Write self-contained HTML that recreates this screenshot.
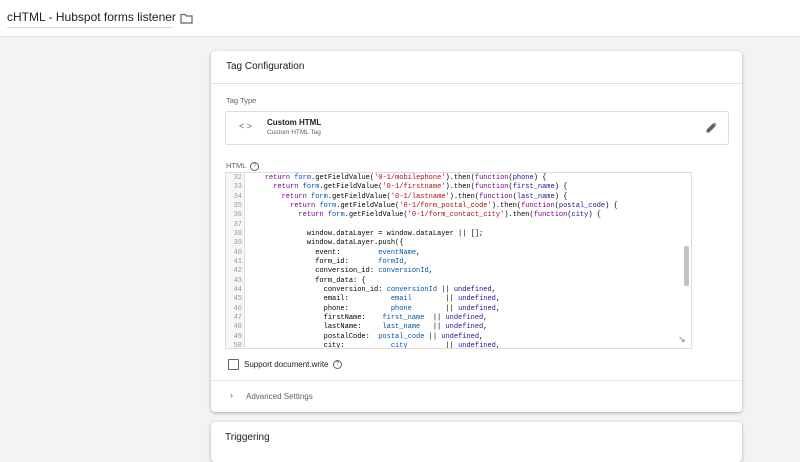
<!DOCTYPE html>
<html><head><style>
body{margin:0;width:800px;height:450px;overflow:hidden;background:#f1f3f4;font-family:"Liberation Sans",sans-serif;position:relative}
.top{position:absolute;left:0;top:0;width:800px;height:36px;background:#fff;border-bottom:1px solid #e6e6e6}
.title{position:absolute;left:7px;top:10px;font-size:12px;color:#202124;border-bottom:1px solid #dadce0;padding-bottom:3px;width:166px;white-space:nowrap}
.card{position:absolute;left:211px;width:531px;background:#fff;border-radius:4px;box-shadow:0 1px 3px rgba(0,0,0,.3)}
.abs{position:absolute}
.code{position:absolute;left:225px;top:172px;width:465px;height:175px;border:1px solid #ddd;overflow:hidden;background:#fff}
.gut{position:absolute;left:0;top:0;width:18px;height:175px;background:#f7f7f7;border-right:1px solid #ddd}
pre{margin:0;font-family:"Liberation Mono",monospace;font-size:7px;line-height:9.33px;position:absolute;top:1px}
.ln{left:0;width:16px;text-align:right;color:#999}
.tx{left:22px;color:#000}
.k{color:#708}.s{color:#a11}.v{color:#05a}.d{color:#219}
</style></head><body>
<div class="top"><div class="title">cHTML - Hubspot forms listener</div>
<svg class="abs" style="left:180px;top:13px" width="13" height="11" viewBox="0 0 13 11"><path d="M1 1.5h4l1.3 1.5H12v7H1z" fill="none" stroke="#5f6368" stroke-width="1.2"/></svg></div>
<div class="card" style="top:51px;height:361px">
<div class="abs" style="left:15px;top:10px;font-size:10px;color:#202124">Tag Configuration</div>
<div class="abs" style="left:0;top:32px;width:531px;height:1px;background:#e0e0e0"></div>
<div class="abs" style="left:15px;top:45px;font-size:7.5px;color:#5f6368">Tag Type</div>
<div class="abs" style="left:14px;top:60px;width:502px;height:32px;border:1px solid #dadce0;border-radius:3px"></div>
<div class="abs" style="left:28px;top:70px;font-size:9px;color:#5f6368">&lt; &gt;</div>
<div class="abs" style="left:56px;top:67px;font-size:8px;font-weight:bold;color:#202124">Custom HTML</div>
<div class="abs" style="left:56px;top:78px;font-size:6.5px;color:#5f6368">Custom HTML Tag</div>
<svg class="abs" style="left:495px;top:71px" width="11" height="11" viewBox="0 0 11 11"><path d="M1 8v2h2l6-6-2-2z M8 1l2 2" fill="#5f6368" stroke="#5f6368" stroke-width="1"/></svg>
<div class="abs" style="left:15px;top:110px;font-size:7.5px;color:#5f6368">HTML &nbsp;<span style="display:inline-block;width:7px;height:7px;border:1px solid #5f6368;border-radius:50%;font-size:5px;text-align:center;line-height:7px;vertical-align:middle">?</span></div>
<div class="abs" style="left:17px;top:308px;width:9px;height:9px;border:1.3px solid #5f6368;border-radius:1px"></div>
<div class="abs" style="left:33px;top:309px;font-size:8px;color:#202124">Support document.write &nbsp;<span style="display:inline-block;width:7px;height:7px;border:1px solid #5f6368;border-radius:50%;font-size:5px;text-align:center;line-height:7px;vertical-align:middle">?</span></div>
<div class="abs" style="left:0;top:329px;width:531px;height:1px;background:#e8e8e8"></div>
<div class="abs" style="left:19px;top:339px;font-size:9px;color:#5f6368">›</div>
<div class="abs" style="left:35px;top:341px;font-size:8px;color:#5f6368">Advanced Settings</div>
</div>
<div class="code"><div class="gut"></div>
<pre class="ln">32
33
34
35
36
37
38
39
40
41
42
43
44
45
46
47
48
49
50</pre>
<pre class="tx">    <span class="k">return</span> <span class="v">form</span>.getFieldValue(<span class="s">'0-1/mobilephone'</span>).then(<span class="k">function</span>(<span class="d">phone</span>) {
      <span class="k">return</span> <span class="v">form</span>.getFieldValue(<span class="s">'0-1/firstname'</span>).then(<span class="k">function</span>(<span class="d">first_name</span>) {
        <span class="k">return</span> <span class="v">form</span>.getFieldValue(<span class="s">'0-1/lastname'</span>).then(<span class="k">function</span>(<span class="d">last_name</span>) {
          <span class="k">return</span> <span class="v">form</span>.getFieldValue(<span class="s">'0-1/form_postal_code'</span>).then(<span class="k">function</span>(<span class="d">postal_code</span>) {
            <span class="k">return</span> <span class="v">form</span>.getFieldValue(<span class="s">'0-1/form_contact_city'</span>).then(<span class="k">function</span>(<span class="d">city</span>) {

              window.dataLayer = window.dataLayer || [];
              window.dataLayer.push({
                event:         <span class="v">eventName</span>,
                form_id:       <span class="v">formId</span>,
                conversion_id: <span class="v">conversionId</span>,
                form_data: {
                  conversion_id: <span class="v">conversionId</span> || <span class="d">undefined</span>,
                  email:          <span class="v">email</span>        || <span class="d">undefined</span>,
                  phone:          <span class="v">phone</span>        || <span class="d">undefined</span>,
                  firstName:    <span class="v">first_name</span>  || <span class="d">undefined</span>,
                  lastName:     <span class="v">last_name</span>   || <span class="d">undefined</span>,
                  postalCode:  <span class="v">postal_code</span> || <span class="d">undefined</span>,
                  city:           <span class="v">city</span>         || <span class="d">undefined</span>,</pre>
<div class="abs" style="left:458px;top:73px;width:5px;height:40px;background:#c1c1c1;border-radius:2px"></div>
<div class="abs" style="left:452px;top:161px;font-size:9px;color:#777">↘</div>
</div>
<div class="card" style="top:422px;height:40px">
<div class="abs" style="left:14px;top:10px;font-size:10px;color:#202124">Triggering</div>
</div>
</body></html>
